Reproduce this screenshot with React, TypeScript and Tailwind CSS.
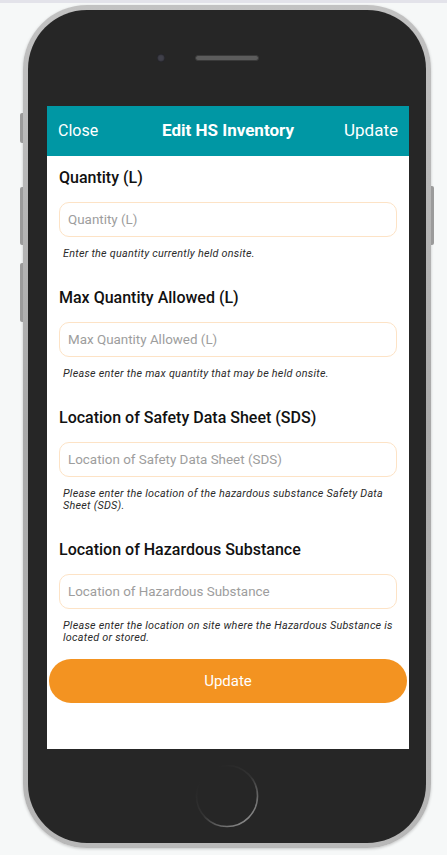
import React from 'react';

interface FieldProps {
  label: string;
  placeholder: string;
  help: string;
}

const FIELDS: FieldProps[] = [
  { label: 'Quantity (L)', placeholder: 'Quantity (L)', help: 'Enter the quantity currently held onsite.' },
  { label: 'Max Quantity Allowed (L)', placeholder: 'Max Quantity Allowed (L)', help: 'Please enter the max quantity that may be held onsite.' },
  {
    label: 'Location of Safety Data Sheet (SDS)',
    placeholder: 'Location of Safety Data Sheet (SDS)',
    help: 'Please enter the location of the hazardous substance Safety Data Sheet (SDS).',
  },
  {
    label: 'Location of Hazardous Substance',
    placeholder: 'Location of Hazardous Substance',
    help: 'Please enter the location on site where the Hazardous Substance is located or stored.',
  },
];

const Field: React.FC<FieldProps> = ({ label, placeholder, help }) => (
  <div className="flex flex-col">
    <label className="text-[16px] leading-[20px] font-medium text-[#111]">{label}</label>
    <input
      className="mt-[14px] h-[35px] w-full rounded-[10px] border border-[#fde3c6] bg-white px-[8px] text-[13.4px] text-[#333] outline-none placeholder:text-[#9d9d9d]"
      placeholder={placeholder}
    />
    <p className="mt-[11px] pl-[4px] pr-[4px] text-[10.8px] leading-[12px] italic tracking-[0.25px] text-[#2b2b2b]">{help}</p>
  </div>
);

const HomeButton = () => (
  <svg width="64" height="64" viewBox="0 0 64 64">
    <defs>
      <linearGradient id="hb" x1="0.2" y1="0.15" x2="0.85" y2="0.95">
        <stop offset="0" stopColor="#262626" />
        <stop offset="0.45" stopColor="#333" />
        <stop offset="1" stopColor="#909090" />
      </linearGradient>
    </defs>
    <circle cx="32" cy="32" r="30.5" fill="none" stroke="url(#hb)" strokeWidth="1.6" />
  </svg>
);

export default function App() {
  return (
    <div className="min-h-[855px] w-[447px] bg-[#f6f8f8] font-['Roboto',sans-serif]">
      <div className="h-[3px] bg-[#e3e3ea]" />
      <div className="relative ml-[23px] mt-[2px] h-[843px] w-[408px] rounded-[64px] bg-gradient-to-b from-[#c2c2c2] via-[#a9a9a9] to-[#b8b8b8] p-[5px] shadow-[0_1px_3px_rgba(0,0,0,0.2)]">
        {/* side buttons */}
        <div className="absolute left-[-3px] top-[108px] h-[30px] w-[3px] rounded-l-[2px] bg-[#9b9b9b]" />
        <div className="absolute left-[-3px] top-[182px] h-[58px] w-[3px] rounded-l-[2px] bg-[#9b9b9b]" />
        <div className="absolute left-[-3px] top-[258px] h-[59px] w-[3px] rounded-l-[2px] bg-[#9b9b9b]" />
        <div className="absolute right-[-3px] top-[181px] h-[59px] w-[3px] rounded-r-[2px] bg-[#9b9b9b]" />

        <div className="flex h-full flex-col rounded-[59px] bg-[#262626]">
          <div className="flex h-[96px] items-start justify-center pt-[44px]">
            <div className="flex items-center gap-[30px]">
              <div className="h-[8px] w-[8px] rounded-full bg-[#40404a] shadow-[inset_0_0_2px_#000]" />
              <div className="h-[6px] w-[64px] rounded-full border border-[#3a3a3a] bg-[#5c5c5c]" />
              <div className="h-[8px] w-[8px]" />
            </div>
          </div>

          <div className="ml-[19px] flex h-[643px] w-[362px] flex-col bg-white">
            <div className="grid h-[50px] grid-cols-[1fr_auto_1fr] items-center bg-[#0097a4] px-[11px] text-white">
              <span className="text-[16px]">Close</span>
              <span className="text-[17px] font-bold">Edit HS Inventory</span>
              <span className="text-right text-[17px]">Update</span>
            </div>
            <div className="flex flex-col gap-[28px] px-[12px] pt-[12px]">
              {FIELDS.map(f => (
                <Field key={f.label} {...f} />
              ))}
            </div>
            <button className="mx-[2px] mt-[15px] h-[44px] rounded-full bg-[#f39321] text-[15px] text-white">Update</button>
          </div>

          <div className="flex flex-1 items-center justify-center">
            <HomeButton />
          </div>
        </div>
      </div>
    </div>
  );
}
